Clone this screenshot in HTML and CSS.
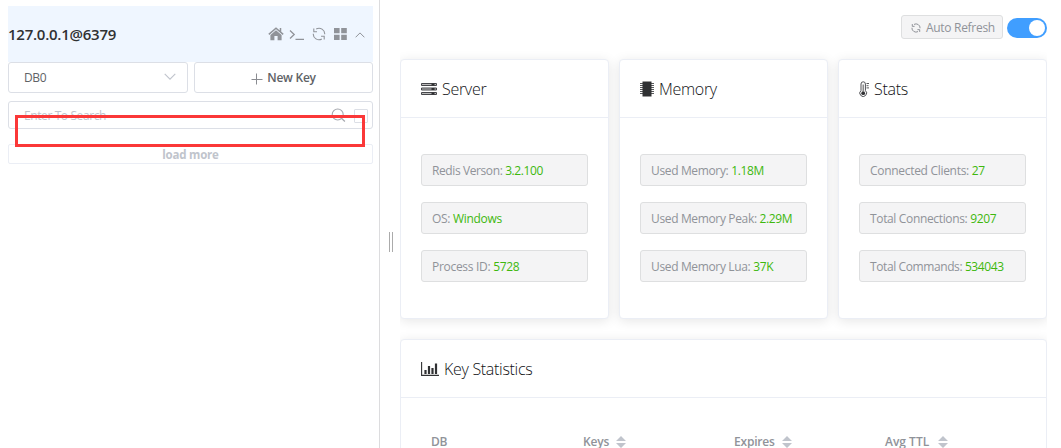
FILE: index.html
```html
<!DOCTYPE html>
<html lang="en">
<head>
<meta charset="utf-8">
<title>Redis Manager</title>
<link rel="stylesheet" href="styles.css">
</head>
<body>
<div class="app">
  <aside class="sidebar">
    <header class="connection">
      <span class="connection-name">127.0.0.1@6379</span>
      <div class="connection-tools">
        <svg class="icon-home" width="16" height="14" viewBox="0 0 16 14"><path d="M8 3.2 13.6 8v5.2H9.6V9H6.4v4.2H2.4V8z" fill="#909399"/><path d="M.8 7.4 8 1.3l7.2 6.1M12.5 1v4" fill="none" stroke="#909399" stroke-width="1.5"/></svg>
        <svg class="icon-term" width="16" height="14" viewBox="0 0 16 14"><path d="m1 3.5 4.2 4L1 11.5M6.5 12.3H15" fill="none" stroke="#909399" stroke-width="1.3"/></svg>
        <svg class="icon-sync" width="14" height="14" viewBox="0 0 14 14"><path d="M4.2 2A5.7 5.7 0 0 1 12.7 7.3M9.8 12A5.7 5.7 0 0 1 1.3 6.7M1.8 1.5v3.2H5M12.2 12.5V9.3H9" fill="none" stroke="#909399" stroke-width="1.1"/></svg>
        <svg class="icon-grid" width="13" height="12" viewBox="0 0 13 12"><path d="M0 0h5.6v5.2H0zM7.2 0h5.6v5.2H7.2zM0 6.8h5.6V12H0zM7.2 6.8h5.6V12H7.2z" fill="#909399"/></svg>
        <svg class="icon-up" width="10" height="6" viewBox="0 0 10 6"><path d="m.6 5.3 4.4-4.4 4.4 4.4" fill="none" stroke="#909399"/></svg>
      </div>
    </header>
    <div class="actions">
      <div class="db-select"><span>DB0</span><svg width="12" height="7" viewBox="0 0 12 7"><path d="m.7.8 5.3 5.3L11.3.8" fill="none" stroke="#c0c4cc" stroke-width="1.1"/></svg></div>
      <div class="new-key"><svg width="12" height="12" viewBox="0 0 12 12"><path d="M5.5 .5v11M.5 6.5h11" stroke="#8a8c91"/></svg><span>New Key</span></div>
    </div>
    <div class="search"><span class="placeholder">Enter To Search</span><svg width="15" height="15" viewBox="0 0 15 15"><circle cx="6.7" cy="6.5" r="5.5" fill="none" stroke="#a4a7ad" stroke-width="1.1"/><path d="m10.7 10.5 3.2 3" stroke="#a4a7ad" stroke-width="1.2"/></svg><span class="checkbox"></span></div>
    <div class="load-more"><span>load more</span></div>
    <div class="highlight"></div>
  </aside>
  <div class="resizer"><i></i></div>
  <main class="content">
    <div class="toolbar">
      <div class="auto"><svg width="10" height="10" viewBox="0 0 14 14"><path d="M4.2 2A5.7 5.7 0 0 1 12.7 7.3M9.8 12A5.7 5.7 0 0 1 1.3 6.7M1.8 1.5v3.2H5M12.2 12.5V9.3H9" fill="none" stroke="#909399" stroke-width="1.4"/></svg><span>Auto Refresh</span></div>
      <div class="switch"></div>
    </div>
    <div class="panels">
      <div class="cards">
        <section class="card">
          <h2><svg width="16" height="14" viewBox="0 0 16 14"><path d="M.5 1.5h15v2H.5zM.5 6h15v2H.5zM.5 10.5h15v2H.5z" fill="#bbb" stroke="#45464a"/><path d="M10.5 2.5h3M10.5 7h3M10.5 11.5h3" stroke="#303133" stroke-width="2"/></svg><span>Server</span></h2>
          <div class="tags">
            <div class="tag tight"><span>Redis Verson: <b>3.2.100</b></span></div>
            <div class="tag loose"><span>OS: <b>Windows</b></span></div>
            <div class="tag loose"><span>Process ID: <b>5728</b></span></div>
          </div>
        </section>
        <section class="card">
          <h2><svg width="14" height="16" viewBox="0 0 14 16"><path d="M2.5.5h9v15h-9z" fill="#303133"/><path d="M0 2.5h14M0 4.5h14M0 6.5h14M0 8.5h14M0 10.5h14M0 12.5h14" stroke="#303133" stroke-width=".8"/></svg><span>Memory</span></h2>
          <div class="tags">
            <div class="tag"><span>Used Memory: <b>1.18M</b></span></div>
            <div class="tag"><span>Used Memory Peak: <b>2.29M</b></span></div>
            <div class="tag"><span>Used Memory Lua: <b>37K</b></span></div>
          </div>
        </section>
        <section class="card">
          <h2><svg width="10" height="16" viewBox="0 0 10 16"><path d="M2 9.5V3a2.2 2.2 0 0 1 4.4 0v6.5a3.4 3.4 0 1 1-4.4 0z" fill="none" stroke="#505155"/><circle cx="4.2" cy="12.2" r="1.9" fill="#303133"/><path d="M4.2 3.5V11" stroke="#777" stroke-width="1.3"/><path d="M7.5 2.5H10M7.5 4.7H9.5M7.5 6.9H10" stroke="#303133" stroke-width=".8"/></svg><span>Stats</span></h2>
          <div class="tags">
            <div class="tag loose"><span>Connected Clients: <b>27</b></span></div>
            <div class="tag"><span>Total Connections: <b>9207</b></span></div>
            <div class="tag tight"><span>Total Commands: <b>534043</b></span></div>
          </div>
        </section>
      </div>
      <section class="card statistics">
        <h2><svg width="18" height="14" viewBox="0 0 18 14"><path d="M.6 0v13.4H18" fill="none" stroke="#303133" stroke-width="1.1"/><path d="M4.5 12V8M8 12V4M11.5 12V6M15 12V1.5" stroke="#303133" stroke-width="2.2"/></svg><span>Key Statistics</span></h2>
        <div class="table-head">
          <div><span>DB</span></div>
          <div><span>Keys</span><svg width="10" height="12" viewBox="0 0 10 12"><path d="m5 0 5 5H0zM0 7h10l-5 5z" fill="#c0c4cc"/></svg></div>
          <div><span>Expires</span><svg width="10" height="12" viewBox="0 0 10 12"><path d="m5 0 5 5H0zM0 7h10l-5 5z" fill="#c0c4cc"/></svg></div>
          <div class="ttl"><span>Avg TTL</span><svg width="10" height="12" viewBox="0 0 10 12"><path d="m5 0 5 5H0zM0 7h10l-5 5z" fill="#c0c4cc"/></svg></div>
        </div>
      </section>
    </div>
  </main>
</div>
</body>
</html>
```
FILE: styles.css
```css
* { box-sizing: border-box; }
body { margin: 0; background: #fff; font: 12px/16px "Open Sans", "Noto Sans", sans-serif; color: #606266; overflow: hidden; }
svg { display: block; flex: none; }
span { white-space: nowrap; }
.app { display: flex; height: 448px; overflow: hidden; }
.sidebar { position: relative; width: 380px; flex: none; padding: 6px 6px 0 8px; border-right: 1px solid #dcdcde; }
.connection { display: flex; align-items: center; justify-content: space-between; height: 56px; background: #eff6ff; padding-right: 8px; }
.connection-name { font-size: 15px; font-weight: 600; color: #303133; letter-spacing: -.25px; }
.connection-tools { display: flex; align-items: center; }
.icon-term { margin-left: 4px; }
.icon-sync { margin-left: 7px; }
.icon-grid { margin-left: 8px; }
.icon-up { margin: 2px 0 0 8px; }
.icon-home { margin-right: 1px; }
.actions { display: flex; gap: 6px; }
.db-select, .new-key { display: flex; align-items: center; height: 31px; border: 1px solid #dcdfe6; border-radius: 3px; }
.db-select { width: 180px; justify-content: space-between; padding: 0 11px 0 15px; letter-spacing: -.4px; }
.db-select svg { margin-bottom: 2px; }
.new-key { width: 179px; justify-content: center; gap: 4px; font-weight: 600; letter-spacing: -.25px; }
.new-key svg { margin-top: 2px; }
.search { display: flex; align-items: center; height: 28px; margin-top: 8px; padding: 0 4px 0 15px; border: 1px solid #dcdfe6; border-radius: 3px; }
.placeholder { flex: 1; padding-top: 2px; color: #c0c4cc; letter-spacing: -.4px; }
.checkbox { width: 14px; height: 14px; margin: 2px 0 0 8px; border: 1px solid #dcdfe6; border-radius: 1px; }
.load-more { height: 20px; margin-top: 15px; border: 1px solid #ebeef5; border-radius: 2px; text-align: center; line-height: 19px; font-size: 11.5px; font-weight: 700; letter-spacing: -.2px; color: #c0c4cc; }
.highlight { position: absolute; left: 15px; top: 115px; width: 350px; height: 32px; border: 3px solid #fb3838; }
.resizer { width: 20px; flex: none; padding: 232px 0 0 9px; }
.resizer i { display: block; width: 4px; height: 20px; border: solid #ababab; border-width: 0 1px; }
.content { width: 647px; padding-top: 15px; }
.toolbar { display: flex; justify-content: flex-end; align-items: center; gap: 4px; height: 24px; }
.auto { display: flex; align-items: center; gap: 4px; width: 102px; height: 24px; padding: 1px 0 0 9px; border: 1px solid #dedfe0; border-radius: 3px; background: #f4f4f5; color: #909399; letter-spacing: -.3px; }
.auto svg { margin-right: 1px; }
.switch { width: 40px; height: 20px; margin-top: 2px; border-radius: 10px; background: #409eff; padding: 2px; }
.switch::after { content: ""; display: block; width: 16px; height: 16px; margin-left: 20px; border-radius: 50%; background: #fff; }
.panels { padding-top: 20px; overflow: hidden; }
.cards { display: flex; gap: 10px; }
.card { width: 209px; height: 260px; border: 1px solid #ebeef5; border-radius: 4px; background: #fff; box-shadow: 0 2px 12px rgba(0,0,0,.1); }
.card h2 { display: flex; align-items: center; gap: 5px; height: 58px; margin: 0; padding: 1px 20px 0; border-bottom: 1px solid #ebeef5; font-size: 16px; line-height: 19px; font-weight: 300; letter-spacing: -.3px; color: #101114; }
.tags { display: grid; gap: 16px; padding: 36px 20px; }
.tag { height: 32px; padding-left: 10px; border: 1px solid #dedfe0; border-radius: 3px; background: #f4f4f5; color: #909399; line-height: 32px; letter-spacing: -.35px; }
.tag.tight { letter-spacing: -.4px; }
.tag.loose { letter-spacing: -.3px; }
.tag b { font-weight: 400; color: #3eb80e; }
.statistics { width: 647px; margin-top: 20px; }
.table-head { display: grid; grid-template-columns: 152px 151px 151px 150px; padding: 38px 0 0 30px; font-weight: 600; line-height: 12px; color: #909399; letter-spacing: -.2px; }
.table-head div { display: flex; align-items: center; gap: 7px; }
.table-head .ttl { gap: 9px; letter-spacing: 0; }
```
